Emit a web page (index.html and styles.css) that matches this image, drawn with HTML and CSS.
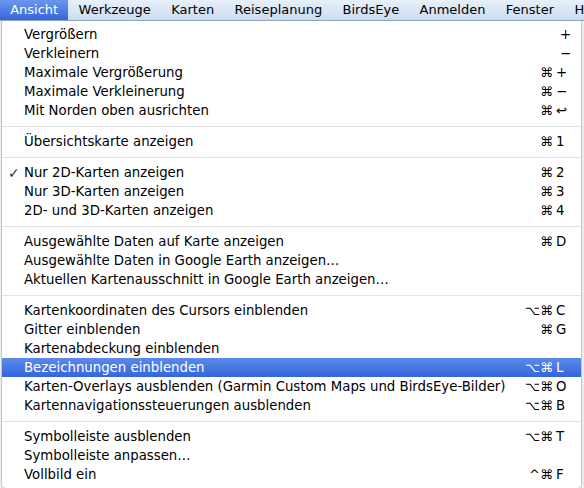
FILE: index.html
```html
<!DOCTYPE html>
<html lang="de">
<head>
<meta charset="utf-8">
<title>Ansicht</title>
<link rel="stylesheet" href="styles.css">
</head>
<body>
<header class="menubar">
  <span class="title active">Ansicht</span>
  <span class="title">Werkzeuge</span>
  <span class="title">Karten</span>
  <span class="title">Reiseplanung</span>
  <span class="title">BirdsEye</span>
  <span class="title">Anmelden</span>
  <span class="title">Fenster</span>
  <span class="title">Hilfe</span>
</header>
<ul class="menu">
  <li class="item"><span class="check"></span><span class="label">Vergrößern</span><span class="mods"></span><span class="key plain">+</span></li>
  <li class="item"><span class="check"></span><span class="label">Verkleinern</span><span class="mods"></span><span class="key plain">−</span></li>
  <li class="item"><span class="check"></span><span class="label">Maximale Vergrößerung</span><span class="mods">⌘</span><span class="key">+</span></li>
  <li class="item"><span class="check"></span><span class="label">Maximale Verkleinerung</span><span class="mods">⌘</span><span class="key">−</span></li>
  <li class="item"><span class="check"></span><span class="label">Mit Norden oben ausrichten</span><span class="mods">⌘</span><span class="key">↩</span></li>
  <li class="sep"></li>
  <li class="item"><span class="check"></span><span class="label">Übersichtskarte anzeigen</span><span class="mods">⌘</span><span class="key">1</span></li>
  <li class="sep"></li>
  <li class="item"><span class="check">✓</span><span class="label">Nur 2D-Karten anzeigen</span><span class="mods">⌘</span><span class="key">2</span></li>
  <li class="item"><span class="check"></span><span class="label">Nur 3D-Karten anzeigen</span><span class="mods">⌘</span><span class="key">3</span></li>
  <li class="item"><span class="check"></span><span class="label">2D- und 3D-Karten anzeigen</span><span class="mods">⌘</span><span class="key">4</span></li>
  <li class="sep"></li>
  <li class="item"><span class="check"></span><span class="label">Ausgewählte Daten auf Karte anzeigen</span><span class="mods">⌘</span><span class="key">D</span></li>
  <li class="item"><span class="check"></span><span class="label">Ausgewählte Daten in Google Earth anzeigen…</span><span class="mods"></span><span class="key"></span></li>
  <li class="item"><span class="check"></span><span class="label">Aktuellen Kartenausschnitt in Google Earth anzeigen…</span><span class="mods"></span><span class="key"></span></li>
  <li class="sep"></li>
  <li class="item"><span class="check"></span><span class="label">Kartenkoordinaten des Cursors einblenden</span><span class="mods">⌥⌘</span><span class="key">C</span></li>
  <li class="item"><span class="check"></span><span class="label">Gitter einblenden</span><span class="mods">⌘</span><span class="key">G</span></li>
  <li class="item"><span class="check"></span><span class="label">Kartenabdeckung einblenden</span><span class="mods"></span><span class="key"></span></li>
  <li class="item selected"><span class="check"></span><span class="label">Bezeichnungen einblenden</span><span class="mods">⌥⌘</span><span class="key">L</span></li>
  <li class="item"><span class="check"></span><span class="label">Karten-Overlays ausblenden (Garmin Custom Maps und BirdsEye-Bilder)</span><span class="mods">⌥⌘</span><span class="key">O</span></li>
  <li class="item"><span class="check"></span><span class="label">Kartennavigationssteuerungen ausblenden</span><span class="mods">⌥⌘</span><span class="key">B</span></li>
  <li class="sep"></li>
  <li class="item"><span class="check"></span><span class="label">Symbolleiste ausblenden</span><span class="mods">⌥⌘</span><span class="key">T</span></li>
  <li class="item"><span class="check"></span><span class="label">Symbolleiste anpassen…</span><span class="mods"></span><span class="key"></span></li>
  <li class="item"><span class="check"></span><span class="label">Vollbild ein</span><span class="mods">^⌘</span><span class="key">F</span></li>
</ul>
</body>
</html>
```

FILE: styles.css
```css
html, body {
  margin: 0;
  padding: 0;
}

body {
  width: 584px;
  height: 488px;
  overflow: hidden;
  background: #ededed;
  font-family: "DejaVu Sans", "Liberation Sans", sans-serif;
  font-size: 13.3px;
  color: #000;
}

/* top menu bar */
.menubar {
  display: flex;
  height: 20px;
  border-bottom: 1px solid #8fa3bf;
  background: linear-gradient(#e8f0fa, #cbdcf1);
  white-space: nowrap;
  overflow: hidden;
  font-size: 13px;
}

.title {
  display: flex;
  align-items: center;
  flex: none;
  padding: 0 10.2px;
  line-height: 20px;
}

.title.active {
  color: #fff;
  background: linear-gradient(#6d97ec, #3565dc);
}

/* dropdown */
.menu {
  list-style: none;
  margin: 0 0 0 1px;
  padding: 4px 0 4px;
  width: 579px;
  height: 459px;
  background: #fff;
  border: 1px solid #c6c6c6;
  border-top: none;
  border-radius: 0 0 5px 5px;
}

.item {
  display: flex;
  align-items: center;
  height: 19px;
  padding: 0 12px 0 6px;
  white-space: nowrap;
}

.check {
  width: 16px;
  flex: none;
  font-size: 14px;
  color: #333;
}

.label {
  flex: 1;
}

.mods {
  flex: none;
  text-align: right;
  margin-right: 3px;
  font-size: 13px;
}

.key {
  flex: none;
  width: 13px;
}

.key.plain {
  padding-left: 4px;
  width: 9px;
}

.item.selected {
  color: #fff;
  background: linear-gradient(#5b8ae8, #3466dc);
}

.sep {
  height: 1px;
  margin: 6px 0 5px;
  background: #e3e3e3;
}
```
